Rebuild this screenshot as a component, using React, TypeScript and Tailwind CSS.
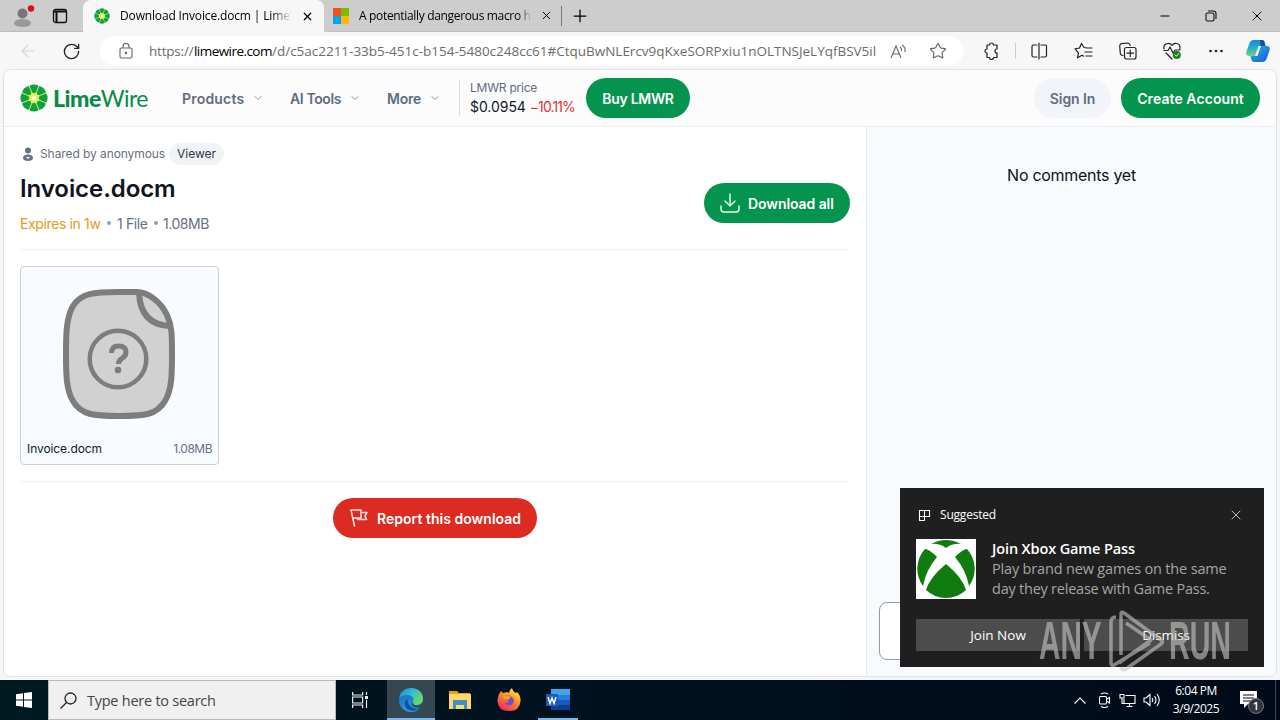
import React from "react";
import { ChevronDown, Star, X, Plus, Minus, RotateCw, ArrowLeft } from "lucide-react";

const ui = "font-['Open_Sans','Noto_Sans',sans-serif]";
const site = "font-['Inter','Liberation_Sans',sans-serif]";

function Lime({ className }: { className: string }) {
  return (
    <svg viewBox="0 0 26 26" className={className}>
      <circle cx="13" cy="13" r="11" fill="#8fdc2a" />
      <circle cx="13" cy="13" r="6" fill="#d9f53a" />
      {[0, 45, 90, 135, 180, 225, 270, 315].map((a) => (
        <path key={a} transform={`rotate(${a} 13 13)`} d="M8.7 1.6Q13-.8 17.3 1.6L15.300 7.500Q13 9.500 10.700 7.500Z" fill="#12a03c" />
      ))}
      {[22.5, 67.5, 112.5, 157.5, 202.5, 247.5, 292.5, 337.5].map((a) => (
        <path key={a} transform={`rotate(${a} 13 13)`} d="M13 2V12" stroke="#d3f59a" strokeWidth=".7" />
      ))}
      <circle cx="13" cy="13" r="2" fill="#fffde0" />
    </svg>
  );
}

function Tabs() {
  return (
    <div className={`${ui} flex h-8 shrink-0 bg-[#cdcdcd] text-[12px] text-black`}>
      <div className="flex h-8 w-[83px] items-center border-b border-[#bdbdbd]">
        <svg className="ml-3 h-6 w-6 shrink-0" viewBox="0 0 24 24">
          <circle cx="10.500" cy="9.500" r="5" fill="#777" />
          <path d="M2 20q0-5 8.500-5t8.500 5q-2 3-8.500 3t-8.500-3z" fill="#999" />
          <circle cx="19" cy="4.500" r="3.200" fill="#e00b1c" />
        </svg>
        <svg className="ml-4 h-4 w-4 shrink-0" viewBox="0 0 16 16" fill="none" stroke="#111" strokeWidth="1.300">
          <rect x="1.500" y="1.500" width="13" height="13" rx="2" />
          <path d="M1.500 3.500h13M4.500 4v10" strokeWidth="2" />
        </svg>
      </div>
      <div className="flex h-8 w-[241px] items-center rounded-t-lg bg-[#f7f7f7]">
        <Lime className="ml-[11px] h-4 w-4 shrink-0" />
        <span className="ml-[10px] w-[172px] overflow-hidden bg-gradient-to-r from-black from-88% to-transparent bg-clip-text tracking-[-0.150px] whitespace-nowrap text-transparent">
          Download Invoice.docm | LimeWire
        </span>
        <X className="ml-[9px] h-[13px] w-[13px] shrink-0" strokeWidth={2.200} />
      </div>
      <div className="flex h-8 w-[237px] items-center rounded-bl-lg border-b border-[#bdbdbd]">
        <svg className="ml-[9px] h-4 w-4 shrink-0" viewBox="0 0 16 16">
          <path fill="#f25022" d="M0 0h8v8H0z" />
          <path fill="#7fba00" d="M8 0h8v8H8z" />
          <path fill="#00a4ef" d="M0 8h8v8H0z" />
          <path fill="#ffb900" d="M8 8h8v8H8z" />
        </svg>
        <span className="ml-[10px] w-[173px] overflow-hidden bg-gradient-to-r from-black from-92% to-transparent bg-clip-text tracking-[-0.330px] whitespace-nowrap text-transparent">
          A potentially dangerous macro has
        </span>
        <X className="ml-[8px] h-[13px] w-[13px] shrink-0" strokeWidth={1.800} />
      </div>
      <div className="flex h-8 flex-1 items-center border-b border-[#bdbdbd]">
        <div className="h-5 w-px bg-[#777]" />
        <Plus className="ml-2 h-5 w-5" strokeWidth={1.500} />
        <div className="flex-1" />
        <Minus className="mr-[33px] h-[14px] w-[14px]" strokeWidth={1.700} />
        <svg className="mr-[32px] h-3 w-3" viewBox="0 0 12 12" fill="none" stroke="#111" strokeWidth="1.100">
          <rect x="1" y="3" width="8" height="8" rx="1.500" />
          <path d="M3 1h5.500a2.500 2.500 0 0 1 2.500 2.500V9" />
        </svg>
        <X className="mr-[15px] h-4 w-4" strokeWidth={1.500} />
      </div>
    </div>
  );
}

function Toolbar() {
  const ic = "h-[18px] w-6 shrink-0";
  const st = { fill: "none", stroke: "#222", strokeWidth: 1.2, strokeLinejoin: "round" as const, strokeLinecap: "round" as const };
  return (
    <div className="flex h-[38px] shrink-0 items-center bg-[#f7f7f7]">
      <ArrowLeft className="ml-[18px] h-5 w-5 shrink-0 text-[#cfcfcf]" strokeWidth={1.300} />
      <RotateCw className="ml-6 h-[19px] w-[19px] shrink-0 text-[#222]" strokeWidth={1.700} />
      <div className={`${ui} ml-[19px] flex h-[30px] w-[863px] shrink-0 items-center rounded-full bg-white text-[13.500px] whitespace-nowrap text-[#6b6b6b]`}>
        <svg className="ml-[19px] h-4 w-[14px] shrink-0" viewBox="0 0 14 16" fill="none" stroke="#666" strokeWidth="1.100">
          <rect x="1" y="5" width="12" height="10" rx="1.500" />
          <path d="M4 5V3.500a3 3 0 0 1 6 0V5" />
          <circle cx="7" cy="10" r=".7" fill="#666" />
        </svg>
        <span className="ml-4 w-[45px] tracking-[-0.2px]">https://</span>
        <span className="w-[78px] tracking-[-0.550px] text-black">limewire.com</span>
        <span className="w-[606px] tracking-[-0.010px]">/d/c5ac2211-33b5-451c-b154-5480c248cc61#CtquBwNLErcv9qKxeSORPxiu1nOLTNSJeLYqfBSV5il</span>
        <svg className="ml-[12px] h-4 w-[18px] shrink-0" viewBox="0 0 18 16" fill="none" stroke="#666" strokeWidth="1.100">
          <path d="M1 15L6 3l5 12M3 11h6M10 4q2 1.500 1.500 4M12 2q4 2.500 3 7" />
        </svg>
        <Star className="ml-[21px] h-[18px] w-[18px] shrink-0 text-[#666]" strokeWidth={1.500} />
      </div>
      <svg className={`${ic} ml-4`} viewBox="0 0 24 18" {...st}>
        <path d="M8 3h2.500a2 2 0 0 1 4 0H18v4a2 2 0 0 0 0 4v4.500h-3.500a2 2 0 0 1-4 0H8V11a2 2 0 0 1 0-4z" />
      </svg>
      <div className="ml-3 h-4 w-px bg-[#ccc]" />
      <svg className={`${ic} ml-[11px]`} viewBox="0 0 24 18" {...st}>
        <path d="M10 3H6.500Q5 3 5 4.500v9Q5 15 6.500 15H10M14 3h4q1.500 0 1.500 1.500v9q0 1.500-1.500 1.500h-4M12 1v16" />
      </svg>
      <svg className={`${ic} ml-[21px]`} viewBox="0 0 24 18" {...st}>
        <path d="M15 6l-3-.5L9.500 1.500 7.500 6l-4.500.8 3.500 4-1 5 4.500-2.500 1.500.8M14 6h6M13 10h7M14 14h6" />
      </svg>
      <svg className={`${ic} ml-5`} viewBox="0 0 24 18" {...st}>
        <path d="M7 13.500l-1-.2q-1.500-.5-1.700-2L3.700 4q0-2 2-2.300l6-.7q2 0 2.500 2.500" />
        <rect x="8.500" y="5.500" width="11.500" height="11.500" rx="2" />
        <path d="M14.300 8v6.500M11 11.200h6.500" />
      </svg>
      <svg className={`${ic} ml-5`} viewBox="0 0 24 18" {...st}>
        <path d="M4 7q-1-4.500 3.500-5.500Q10.500 1 12 3.500 13.500 1 16.500 1.500 21 2.500 19.800 7M4 8.500h4l2-3.500 3 6 2-3h5M6 11l6 6" />
        <circle cx="16.800" cy="13" r="4" fill="#16801c" stroke="none" />
        <path d="M15 13l1.300 1.300 2.300-2.600" stroke="#fff" strokeWidth="1" />
      </svg>
      <svg className={`${ic} ml-5`} viewBox="0 0 24 18" fill="#222">
        <circle cx="6.500" cy="9" r="1.300" /><circle cx="12" cy="9" r="1.300" /><circle cx="17.500" cy="9" r="1.300" />
      </svg>
      <svg className="ml-[18px] h-6 w-6 shrink-0" viewBox="0 0 24 24">
        <defs>
          <linearGradient id="ca" x2="0" y2="1"><stop stopColor="#1687d9" /><stop offset=".5" stopColor="#22afd0" /><stop offset="1" stopColor="#70d66e" /></linearGradient>
          <linearGradient id="cb" x2="1" y2="1"><stop stopColor="#28b7ed" /><stop offset="1" stopColor="#1758d7" /></linearGradient>
        </defs>
        <path d="M8 1h8q2 0 2.500 2l1 4h-5L11 17H3q-3.500 0-2.700-4L3.500 4Q4.500 1 8 1z" fill="url(#ca)" />
        <path d="M14 1h2q2 0 2.500 2l1 4h-5z" fill="#174f9e" />
        <path d="M16 23H8q-2 0-2.500-2l-1-4h5L13 7h8q3.500 0 2.700 4l-3.200 9q-1 3-4.500 3z" fill="url(#cb)" />
        <path d="M12.500 7H15l-3.500 10H9z" fill="#f7f7f7" />
      </svg>
    </div>
  );
}

function Header() {
  const chev = "h-3 w-3 shrink-0 text-[#8f97a5]";
  return (
    <div className="flex h-[57px] shrink-0 items-center border-b border-[#ebedf0] bg-[#fcfcfc] text-[14px] font-semibold whitespace-nowrap text-[#626b80]">
      <Lime className="ml-4 h-[28px] w-[28px] shrink-0" />
      <div className="ml-[5px] w-[129px] shrink-0 font-['Lato',sans-serif] text-[23px] leading-none tracking-[-0.500px] text-[#078b45]">
        <span className="font-black">Lime</span><span className="font-normal">Wire</span>
      </div>
      <span className="w-[70px] shrink-0 tracking-[0.200px]">Products</span>
      <ChevronDown className={chev} />
      <span className="ml-[26px] w-[59px] shrink-0 tracking-[-0.400px]">AI Tools</span>
      <ChevronDown className={chev} />
      <span className="ml-[26px] w-[42px] shrink-0 tracking-[-0.200px]">More</span>
      <ChevronDown className={chev} />
      <div className="ml-[18px] h-9 w-px bg-[#d7dae0]" />
      <div className="ml-[10px] w-[116px] shrink-0 font-normal">
        <div className="text-[12px] leading-[18px] tracking-[-0.230px]">LMWR price</div>
        <div className="text-[14px] leading-5 tracking-[-0.050px] text-[#111827]">$0.0954 <span className="tracking-[-0.900px] text-[#dc3035]">−10.11%</span></div>
      </div>
      <button className="h-10 w-[104px] shrink-0 rounded-full bg-[#04944d] tracking-[-0.300px] text-white">Buy LMWR</button>
      <div className="flex-1" />
      <button className="h-10 w-[77px] rounded-full bg-[#f1f4f8] tracking-[-0.100px]">Sign In</button>
      <button className="mr-4 ml-[10px] h-10 w-[139px] rounded-full bg-[#04944d] tracking-[0.080px] text-white">Create Account</button>
    </div>
  );
}

function FileIcon() {
  return (
    <svg className="h-[130px] w-[112px]" viewBox="0 0 112 130" fill="none" stroke="#7d7d7d">
      <path d="M56 3C31 3 18 4 10 17 3 29 3 46 3 65s0 36 7 47c8 14 21 15 46 15s38-1 46-15c7-11 7-28 7-47s0-28-5-39C97 11 83 3 74 3z" fill="#d1d1d1" strokeWidth="6" />
      <path d="M76 4c1 20 10 33 33 33" strokeWidth="6" />
      <circle cx="55" cy="70" r="28.300" strokeWidth="4.500" />
      <path d="M48.500 64q0-7 7-7 7.500 0 7.500 6 0 4-4 6.500-3.500 2-3.500 5.500" strokeWidth="5" />
      <circle cx="55" cy="81" r="3.300" fill="#7d7d7d" stroke="none" />
    </svg>
  );
}

function Content() {
  return (
    <main className="flex w-[863px] shrink-0 flex-col border-r border-[#e5e9ee] bg-white pr-[18px] pl-4 whitespace-nowrap text-[#677083]">
      <div className="flex h-[123px] border-b border-[#eff1f4]">
        <div className="flex-1">
          <div className="mt-4 flex h-[22px] items-center text-[12px]">
            <svg className="h-4 w-4" viewBox="0 0 16 16" fill="#6b7287">
              <circle cx="8" cy="4.500" r="3" />
              <path d="M8 8.500c3 0 5 1.500 5 3.300S11.500 15 8 15s-5-1.400-5-3.200S5 8.500 8 8.500z" />
              <path d="M6 11h4l-2 2z" fill="#fff" />
            </svg>
            <span className="ml-1 w-[129px] tracking-[-0.080px]">Shared by anonymous</span>
            <span className="flex h-[22px] w-[55px] items-center justify-center rounded-full bg-[#f1f3f7] text-[#303747]">Viewer</span>
          </div>
          <h1 className="mt-[9px] text-[24px] leading-[30px] font-semibold tracking-[-0.070px] text-[#0e1420]">Invoice.docm</h1>
          <div className="mt-[9px] flex h-5 items-center text-[14px]">
            <span className="w-[87px] tracking-[-0.370px] text-[#e79a20]">Expires in 1w</span>
            <i className="mr-[6px] h-1 w-1 rounded-full bg-[#959daa]" />
            <span className="w-[37px] tracking-[-0.370px]">1 File</span>
            <i className="mr-[5px] h-1 w-1 rounded-full bg-[#959daa]" />
            <span className="tracking-[-0.450px]">1.08MB</span>
          </div>
        </div>
        <button className="mt-14 -mr-[2px] flex h-10 w-[146px] items-center rounded-full bg-[#04944d] text-[14px] font-semibold text-white">
          <svg className="ml-4 h-5 w-5" viewBox="0 0 20 20" fill="none" stroke="#dcfce7" strokeWidth="1.500" strokeLinecap="round" strokeLinejoin="round">
            <path d="M10 1v12M5 8l5 5 5-5M1 13v3q0 3 3 3h12q3 0 3-3v-3" />
          </svg>
          <span className="ml-2 tracking-[-0.080px]">Download all</span>
        </button>
      </div>
      <div className="flex h-[232px] items-center border-b border-[#eff1f4]">
        <div className="flex h-[199px] w-[199px] flex-col rounded border border-[#cbd0d7] bg-[#f8fbff]">
          <div className="mt-[22px] ml-[42px]"><FileIcon /></div>
          <div className="mt-[21px] flex justify-between px-[6px] text-[12px] leading-[18px]">
            <span className="tracking-[-0.080px] text-[#111827]">Invoice.docm</span><span className="tracking-[-0.500px]">1.08MB</span>
          </div>
        </div>
      </div>
      <button className="mt-4 ml-[313px] flex h-10 w-[204px] items-center rounded-full bg-[#dc2b20] text-[14px] font-semibold text-white">
        <svg className="ml-[17px] h-[18px] w-[18px]" viewBox="0 0 18 18" fill="none" stroke="#ffdcda" strokeWidth="1.600" strokeLinejoin="round" strokeLinecap="round">
          <path d="M1 1l3.500 16M1 1h10v8H3M11 3.500h6L15 7l1.500 3.500H7.500V9" />
        </svg>
        <span className="ml-[9px] tracking-[0.020px]">Report this download</span>
      </button>
    </main>
  );
}

function Watermark() {
  return (
    <div className="absolute top-[120px] left-[138px] h-[66px] w-[196px] text-[#c7c7c7] opacity-60">
      <span className="absolute top-[-2px] left-[1px] origin-left scale-x-[0.560] font-['Liberation_Sans',sans-serif] text-[53px] leading-[70px] font-bold">ANY</span>
      <svg className="absolute top-[1px] left-[71px] h-[63px] w-[58px]" viewBox="0 0 58 63" fill="none" stroke="currentColor" strokeWidth="3.500" strokeLinejoin="round">
        <path d="M7 8Q2 8 2 13v41q0 3 3 2l36-22M12 46V5q0-3 3-1l37 27q3 2 0 4L17 60q-4 2-5-2M17 14l25 17-32 23" />
      </svg>
      <span className="absolute top-[-2px] left-[131px] origin-left scale-x-[0.540] font-['Liberation_Sans',sans-serif] text-[53px] leading-[70px] font-bold">RUN</span>
    </div>
  );
}

function Toast() {
  return (
    <aside className={`${ui} absolute top-[488px] left-[900px] h-[179px] w-[364px] bg-[#1f1f1f] px-4 whitespace-nowrap text-white`}>
      <div className="flex h-[51px] items-center pt-[3px] text-[12px]">
        <svg className="ml-[2px] h-[13px] w-[13px]" viewBox="0 0 13 13" fill="none" stroke="#fff" strokeWidth="1.100">
          <path d="M1.500 1.500h10v6h-10zM1.500 1.500v10h5v-10" />
        </svg>
        <span className="ml-[9px] flex-1 tracking-[-0.200px]">Suggested</span>
        <X className="mr-1 h-4 w-4 text-[#bbb]" strokeWidth={1.500} />
      </div>
      <div className="flex">
        <svg className="h-[60px] w-[60px] shrink-0" viewBox="0 0 60 60">
          <path fill="#fff" d="M0 0h60v60H0z" />
          <g fill="#107c10">
            <path d="M15 5Q30-3 45 5 37 4 30 9 23 4 15 5z" />
            <path d="M9 10Q13 10 21 18 10 31 7 47A29 29 0 0 1 9 10zM51 10Q47 10 39 18 50 31 53 47A29 29 0 0 0 51 10z" />
            <path d="M30 25Q46 38 50 51A29 29 0 0 1 10 51Q14 38 30 25z" />
          </g>
        </svg>
        <div className="ml-4 text-[14.500px] leading-5">
          <div className="font-semibold tracking-[-0.120px]">Join Xbox Game Pass</div>
          <div className="tracking-[-0.170px] text-[#a5a5a5]">Play brand new games on the same</div>
          <div className="tracking-[-0.230px] text-[#a5a5a5]">day they release with Game Pass.</div>
        </div>
      </div>
      <div className="mt-5 flex gap-1 text-[13.500px]">
        <div className="flex h-8 w-[164px] items-center justify-center bg-[#4c4c4c]">Join Now</div>
        <div className="flex h-8 w-[164px] items-center justify-center bg-[#4c4c4c] tracking-[-0.100px]">Dismiss</div>
      </div>
      <Watermark />
    </aside>
  );
}

function Taskbar() {
  return (
    <footer className={`${ui} flex h-10 shrink-0 items-center bg-gradient-to-r from-[#001820] to-[#000a19] whitespace-nowrap text-white`}>
      <svg className="mx-4 h-4 w-4 shrink-0" viewBox="0 0 16 16" fill="#fff">
        <path d="M0 2.200L7 1.200v6.300H0zM8 1l8-1v7.500H8zM0 8.500h7v6.300l-7-1zM8 8.500h8V16l-8-1z" />
      </svg>
      <div className="flex h-10 w-[288px] shrink-0 items-center border border-[#b9b9b9] bg-[#f0f0f0] text-[14.500px] text-[#444]">
        <svg className="ml-[11px] h-[17px] w-[17px]" viewBox="0 0 17 17" fill="none" stroke="#222" strokeWidth="1.300">
          <circle cx="10.500" cy="6.500" r="5.500" /><path d="M6.500 10.500L.5 16.500" />
        </svg>
        <span className="ml-[10px] pt-px tracking-[-0.250px]">Type here to search</span>
      </div>
      <svg className="ml-4 h-4 w-4 shrink-0" viewBox="0 0 16 16" fill="none" stroke="#e7edf0" strokeWidth="1.200">
        <path d="M.6 0v3h10V0M.6 5h10v6H.6zM.6 16v-3h10v3M14.500 0v3M14.500 8v8" /><path d="M13 4h3v3h-3z" fill="#fff" stroke="none" />
      </svg>
      <div className="ml-[19px] flex h-10 w-12 items-center justify-center border-b-2 border-[#76b9ed] bg-[#354850] pt-[2px]">
        <svg className="h-6 w-6" viewBox="0 0 24 24">
          <defs>
            <linearGradient id="ea" x2="1" y2=".6"><stop stopColor="#1c86d4" /><stop offset=".5" stopColor="#31bdd2" /><stop offset="1" stopColor="#69dc63" /></linearGradient>
            <linearGradient id="eb" x2=".3" y2="1"><stop stopColor="#0f62b5" /><stop offset="1" stopColor="#299be4" /></linearGradient>
          </defs>
          <circle cx="12" cy="12" r="12" fill="url(#eb)" />
          <path d="M.3 10Q2 0 12 0c8 0 12 6 12 10 0 5-4 7-7 7-4 0-4-2-3-3 2-3-1-7-5-7Q3 7 .3 10z" fill="url(#ea)" />
          <path d="M9 10q-6 5-1 11 6 4 13-1-6 2-10-2-4-4-2-8z" fill="#124f9e" />
          <path d="M14 14q0 3.500 4 3.500 3.500 0 6-3.500v4l-2 1.500q-6 1-9-2-1-2 1-3.500z" fill="#354850" />
        </svg>
      </div>
      <svg className="ml-[14px] h-[22px] w-[22px]" viewBox="0 0 22 22">
        <path d="M0 2h8l2 2h11v4H0z" fill="#eb9d13" /><path d="M0 5h22v15H0z" fill="#ffdb65" /><path d="M4 11h14v9h-3v-4H7v4H4z" fill="#3b91d0" />
      </svg>
      <svg className="ml-[26px] h-6 w-6" viewBox="0 0 24 24">
        <defs><linearGradient id="ff" x1=".8" x2=".2" y2="1"><stop stopColor="#fff13d" /><stop offset=".45" stopColor="#ff8e1f" /><stop offset="1" stopColor="#f51d6d" /></linearGradient></defs>
        <path d="M4 3l2 2 4-1 2 1q0-3 3-5 1 4 4 5l1-1q4 4 3.500 9-.5 10-11.500 10T.5 13Q0 8 4 3z" fill="url(#ff)" />
        <path d="M7 8q4-2 8 1 4 4 0 7.500-5 2.500-8-2l3 .5 2-2-4-1z" fill="#7548d5" />
        <path d="M6 8q5-2 8 1l-3 3-4-1z" fill="#ff9f22" />
      </svg>
      <div className="ml-[17px] flex h-10 w-10 items-center justify-center border-b-2 border-[#76b9ed] pt-[2px]">
        <svg className="h-[22px] w-6" viewBox="0 0 24 22">
          <path d="M5 0h19v6H5z" fill="#41a5ee" /><path d="M5 6h19v5H5z" fill="#2b7cd3" /><path d="M5 11h19v5H5z" fill="#185abd" /><path d="M5 16h19v5H5z" fill="#103f91" />
          <path d="M0 5h12v12H0z" fill="#185abd" /><path d="M2 8l2 6.500L6 9l2 5.500L10 8" fill="none" stroke="#fff" strokeWidth="1.500" />
        </svg>
      </div>
      <div className="flex-1" />
      <svg className="h-[7px] w-3" viewBox="0 0 12 7" fill="none" stroke="#fff" strokeWidth="1.200"><path d="M.5 6.500L6 1l5.500 5.500" /></svg>
      <svg className="ml-3 h-4 w-[13px]" viewBox="0 0 13 16" fill="none" stroke="#fff" strokeWidth="1.100">
        <rect x="1.500" y="4.500" width="7" height="7.500" rx="1" /><path d="M9 7l2.500-1.500v5.500L9 9.500M3 2q3.500-2 7 0M3 14.500q3.500 2 7 0" />
      </svg>
      <svg className="ml-[8px] h-[15px] w-[17px]" viewBox="0 0 16 15" fill="none" stroke="#fff" strokeWidth="1.100">
        <path d="M6 2.500h9.500v8H4.500V6M7 13.500h6M10 10.500v3M.5 1.500h4V5h-4zM2.500 5v5.500h2" />
      </svg>
      <svg className="ml-[7px] h-[14px] w-[18px]" viewBox="0 0 18 14" fill="none" stroke="#fff" strokeWidth="1.100">
        <path d="M1 5h2l4-3.500v11L3 9H1zM9 5q1.500 2 0 4M11.500 3q3 4 0 8M14 1q4.500 6 0 12" />
      </svg>
      <div className="ml-[5px] w-[60px] text-center text-[12px] leading-[18px] tracking-[-0.450px]"><div>6:04 PM</div><div>3/9/2025</div></div>
      <div className="relative ml-[14px] h-6 w-[35px]">
        <svg className="mt-[2px] h-[19px] w-[17px]" viewBox="0 0 17 19"><path d="M0 1h17v13h-9l-4 4v-4H0z" fill="#fff" /><path d="M3 5h11M3 8h11M3 11h8" stroke="#000a19" /></svg>
        <span className="absolute top-[10px] left-[8px] flex h-4 w-4 items-center justify-center rounded-full border border-[#777] bg-[#303540] text-[11px] font-semibold">1</span>
      </div>
      <div className="h-10 w-px bg-[#3d4650]" />
      <div className="w-1" />
    </footer>
  );
}

export default function App() {
  return (
    <div className={`${site} relative flex h-[720px] w-[1280px] flex-col overflow-hidden bg-[#f4f6f8]`}>
      <Tabs />
      <Toolbar />
      <div className="mx-[3px] -mt-px mb-[3px] flex h-[608px] shrink-0 flex-col overflow-hidden rounded-lg border border-[#dfe2e6] bg-white">
        <Header />
        <div className="flex flex-1">
          <Content />
          <aside className="flex flex-1 flex-col bg-[#f8fbfe]">
            <div className="mt-[36px] text-center text-[16px] leading-6 tracking-[-0.280px] text-[#111]">No comments yet</div>
            <div className="mt-auto mr-3 mb-4 ml-3 h-[58px] rounded-lg border border-[#9299a5] bg-white" />
          </aside>
        </div>
      </div>
      <Toast />
      <Taskbar />
    </div>
  );
}
